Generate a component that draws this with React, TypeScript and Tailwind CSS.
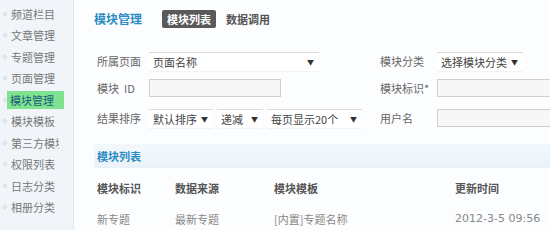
import React from "react";

const side = ["频道栏目", "文章管理", "专题管理", "页面管理", "模块管理", "模块模板", "第三方模块", "权限列表", "日志分类", "相册分类"];

function Sel({ w, text }: { w: string; text: string }) {
  return (
    <div className={`${w} relative h-[19px] flex items-center bg-white border-t border-[#dcdcdc] shadow-[0_1px_1px_rgba(0,0,0,0.04)] pl-[4px] text-[11px] text-[#444]`}>
      <span className="whitespace-nowrap">{text}</span>
      <span className="absolute right-[5px] top-[4px] text-[7px] text-[#333]">▼</span>
    </div>
  );
}

function Inp({ w }: { w: string }) {
  return <div className={`${w} h-[18px] border border-[#cfcfcf] bg-[#f7f7f7]`} />;
}

export default function App() {
  return (
    <div
      className="w-[550px] h-[230px] overflow-hidden flex bg-[#fcfdfe]"
      style={{ fontFamily: '"Noto Sans CJK SC", "Noto Sans", sans-serif' }}
    >
      <div className="w-[74px] shrink-0 bg-[#f1f5f9] border-r border-[#e1e8ef] pt-[3px] flex flex-col">
        {side.map((s, i) => (
          <div key={s} className="h-[21.5px] flex items-center pl-[3px] text-[11px] text-[#777]">
            <span className="w-[4px] h-[4px] rounded-full border border-[#cfd8e0] mr-[4px] shrink-0" />
            <span
              className={
                i === 4
                  ? "bg-[#7ee28f] text-[#1b5f7a] px-[3px] -ml-[4px] w-[57px] h-[18px] leading-[18px] whitespace-nowrap"
                  : "whitespace-nowrap overflow-hidden w-[48px]"
              }
            >
              {s}
            </span>
          </div>
        ))}
      </div>
      <div className="flex-1 flex flex-col pl-[20px]">
        <div className="h-[39px] flex items-center">
          <span className="text-[12px] font-bold text-[#2b8cc4] w-[68px]">模块管理</span>
          <span className="bg-[#5a5a5a] text-white text-[11px] font-bold px-[5px] h-[18px] leading-[18px] rounded-[2px]">模块列表</span>
          <span className="text-[11px] font-bold text-[#555] ml-[10px]">数据调用</span>
        </div>
        <div className="flex flex-col pl-[3px] pt-[14px] text-[11px] text-[#666] gap-[8px]">
          <div className="flex items-center">
            <span className="w-[52px]">所属页面</span>
            <Sel w="w-[170px]" text="页面名称" />
            <span className="ml-[61px] w-[57px]">模块分类</span>
            <Sel w="w-[86px]" text="选择模块分类" />
          </div>
          <div className="flex items-center">
            <span className="w-[52px]">模块&nbsp; ID</span>
            <Inp w="w-[132px]" />
            <span className="ml-[99px] w-[57px]">模块标识*</span>
            <Inp w="w-[120px]" />
          </div>
          <div className="flex items-center mt-[4px]">
            <span className="w-[52px]">结果排序</span>
            <Sel w="w-[64px]" text="默认排序" />
            <div className="w-[4px]" />
            <Sel w="w-[46px]" text="递减" />
            <div className="w-[4px]" />
            <Sel w="w-[95px]" text="每页显示20个" />
            <span className="ml-[18px] w-[57px]">用户名</span>
            <Inp w="w-[120px]" />
          </div>
        </div>
        <div className="mt-[16px] h-[25px] bg-gradient-to-b from-[#f3f8fc] to-[#eaf2f9] flex items-center pl-[3px]">
          <span className="text-[11px] font-bold text-[#2b8cc4]">模块列表</span>
        </div>
        <div className="flex items-center h-[42px] pl-[3px] text-[11px] font-bold text-[#555]">
          <span className="w-[78px]">模块标识</span>
          <span className="w-[99px]">数据来源</span>
          <span className="w-[181px]">模块模板</span>
          <span>更新时间</span>
        </div>
        <div className="flex items-center h-[22px] pl-[3px] text-[11px] text-[#888]">
          <span className="w-[78px]">新专题</span>
          <span className="w-[99px]">最新专题</span>
          <span className="w-[181px]">[内置]专题名称</span>
          <span style={{ fontFamily: '"DejaVu Sans", sans-serif' }} className="text-[11px]">2012-3-5 09:56</span>
        </div>
      </div>
    </div>
  );
}
